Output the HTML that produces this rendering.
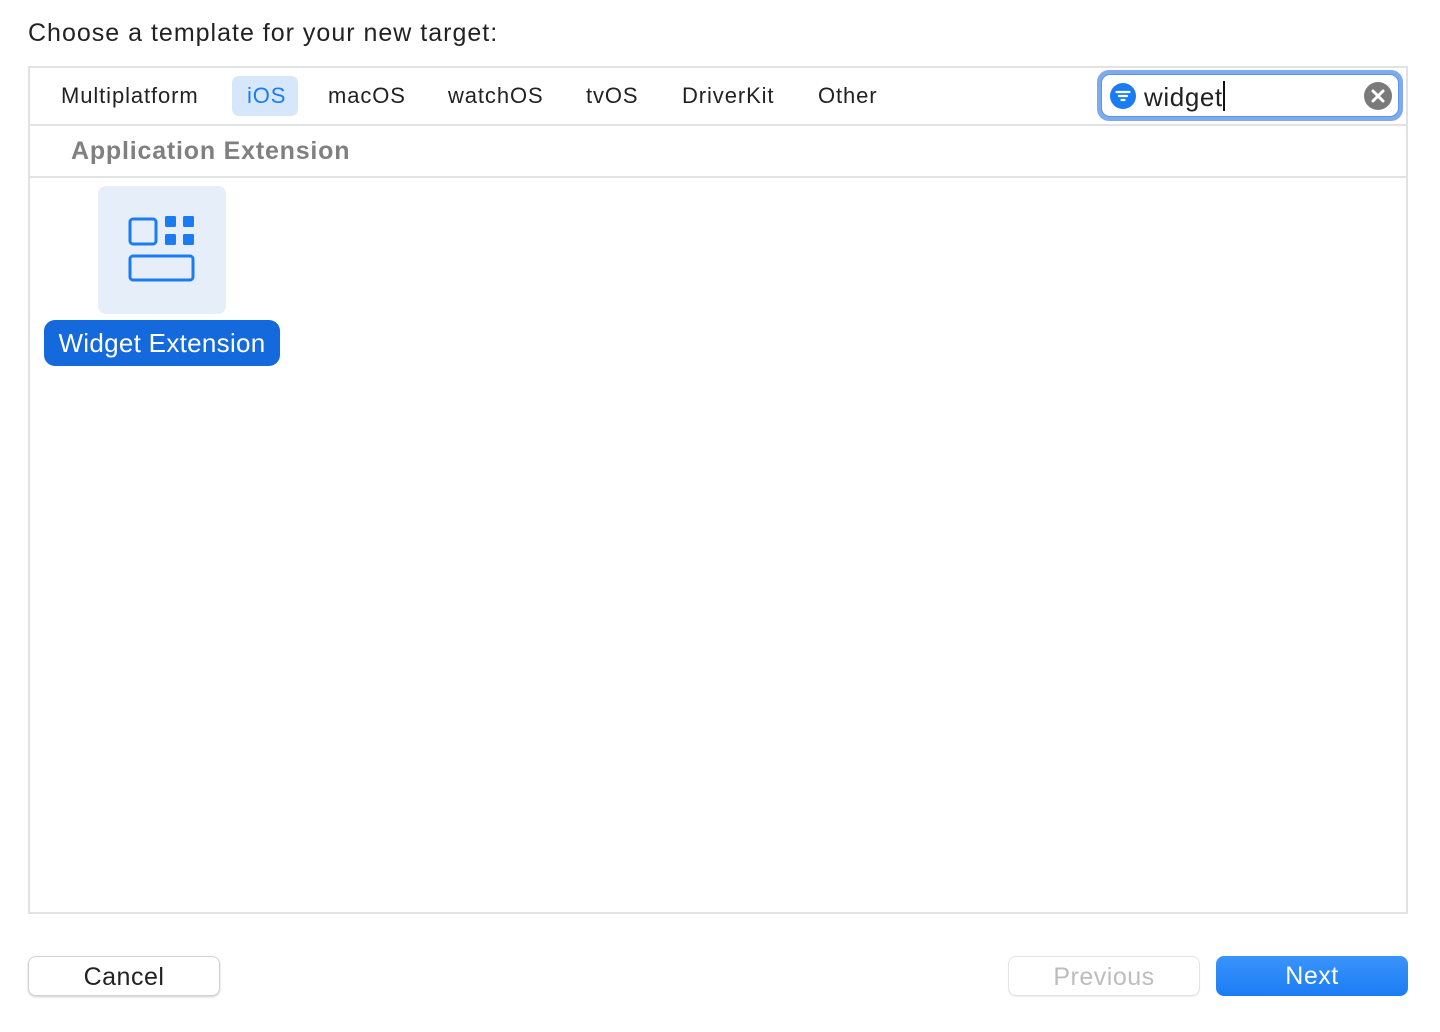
<!DOCTYPE html>
<html><head><meta charset="utf-8"><style>
body{margin:0;width:1440px;height:1032px;background:#fff;font-family:"Liberation Sans",sans-serif;position:relative;overflow:hidden;color:#222}
.a{position:absolute}
.tab{position:absolute;top:82px;font-size:22px;color:#222;line-height:28px;letter-spacing:0.9px}
.btn{position:absolute;top:956px;height:40px;width:192px;border-radius:8px;font-size:25px;text-align:center;line-height:40px;box-sizing:border-box;letter-spacing:0.5px}
</style></head><body>
<div class="a" style="left:28px;top:18px;font-size:25px;line-height:30px;color:#222;letter-spacing:1px">Choose a template for your new target:</div>
<div class="a" style="left:28px;top:66px;width:1376px;height:844px;border:2px solid #e2e2e2"></div>
<div class="a" style="left:30px;top:124px;width:1376px;height:2px;background:#e2e2e2"></div>
<div class="a" style="left:30px;top:176px;width:1376px;height:2px;background:#e2e2e2"></div>
<div class="a" style="left:232px;top:76px;width:66px;height:40px;background:#d6e6fb;border-radius:7px"></div>
<div class="tab" style="left:61px">Multiplatform</div>
<div class="tab" style="left:247px;color:#1a7cf4">iOS</div>
<div class="tab" style="left:328px">macOS</div>
<div class="tab" style="left:448px">watchOS</div>
<div class="tab" style="left:586px">tvOS</div>
<div class="tab" style="left:682px">DriverKit</div>
<div class="tab" style="left:818px">Other</div>
<div class="a" style="left:1097px;top:70px;width:306px;height:51px;border-radius:12px;background:#7fabee"></div>
<div class="a" style="left:1101px;top:74px;width:298px;height:43px;border-radius:9px;background:#fff;border:1px solid #5d93e3;box-sizing:border-box"></div>
<svg class="a" style="left:1110px;top:83px" width="26" height="26" viewBox="0 0 26 26"><circle cx="13" cy="13" r="13" fill="#1a7cf4"/><path d="M6.5 9h13M9 13h8M11.5 17h3" stroke="#fff" stroke-width="2.2" stroke-linecap="round"/></svg>
<div class="a" style="left:1144px;top:81px;font-size:26px;line-height:32px;color:#222;letter-spacing:0.6px">widget</div>
<div class="a" style="left:1223px;top:81px;width:2px;height:30px;background:#111"></div>
<svg class="a" style="left:1364px;top:82px" width="28" height="28" viewBox="0 0 28 28"><circle cx="14" cy="14" r="14" fill="#7a7a7a"/><path d="M9 9l10 10M19 9L9 19" stroke="#fff" stroke-width="3" stroke-linecap="round"/></svg>
<div class="a" style="left:71px;top:136px;font-size:25px;font-weight:bold;color:#808080;line-height:30px;letter-spacing:0.8px">Application Extension</div>
<div class="a" style="left:98px;top:186px;width:128px;height:128px;border-radius:8px;background:#e6eef9"></div>
<svg class="a" style="left:98px;top:186px" width="128" height="128" viewBox="0 0 128 128">
<rect x="32" y="33" width="26" height="25" rx="3" fill="none" stroke="#1a7cf4" stroke-width="3"/>
<rect x="67" y="30" width="11" height="11" rx="1.5" fill="#1a7cf4"/><rect x="85" y="30" width="11" height="11" rx="1.5" fill="#1a7cf4"/>
<rect x="67" y="48" width="11" height="11" rx="1.5" fill="#1a7cf4"/><rect x="85" y="48" width="11" height="11" rx="1.5" fill="#1a7cf4"/>
<rect x="32" y="70" width="63" height="24" rx="3" fill="none" stroke="#1a7cf4" stroke-width="3"/></svg>
<div class="a" style="left:44px;top:320px;width:236px;height:46px;border-radius:11px;background:#1469dd;color:#fff;font-size:26px;line-height:46px;text-align:center;letter-spacing:0.3px">Widget Extension</div>
<div class="btn" style="left:28px;background:#fff;border:1px solid #d4d4d4;box-shadow:0 1px 2px rgba(0,0,0,.2);color:#222">Cancel</div>
<div class="btn" style="left:1008px;background:#fff;border:1px solid #e4e4e4;box-shadow:0 1px 1px rgba(0,0,0,.08);color:#bdbdbd">Previous</div>
<div class="btn" style="left:1216px;background:linear-gradient(#3a94fb,#1c7cf4);color:#fff">Next</div>
</body></html>
